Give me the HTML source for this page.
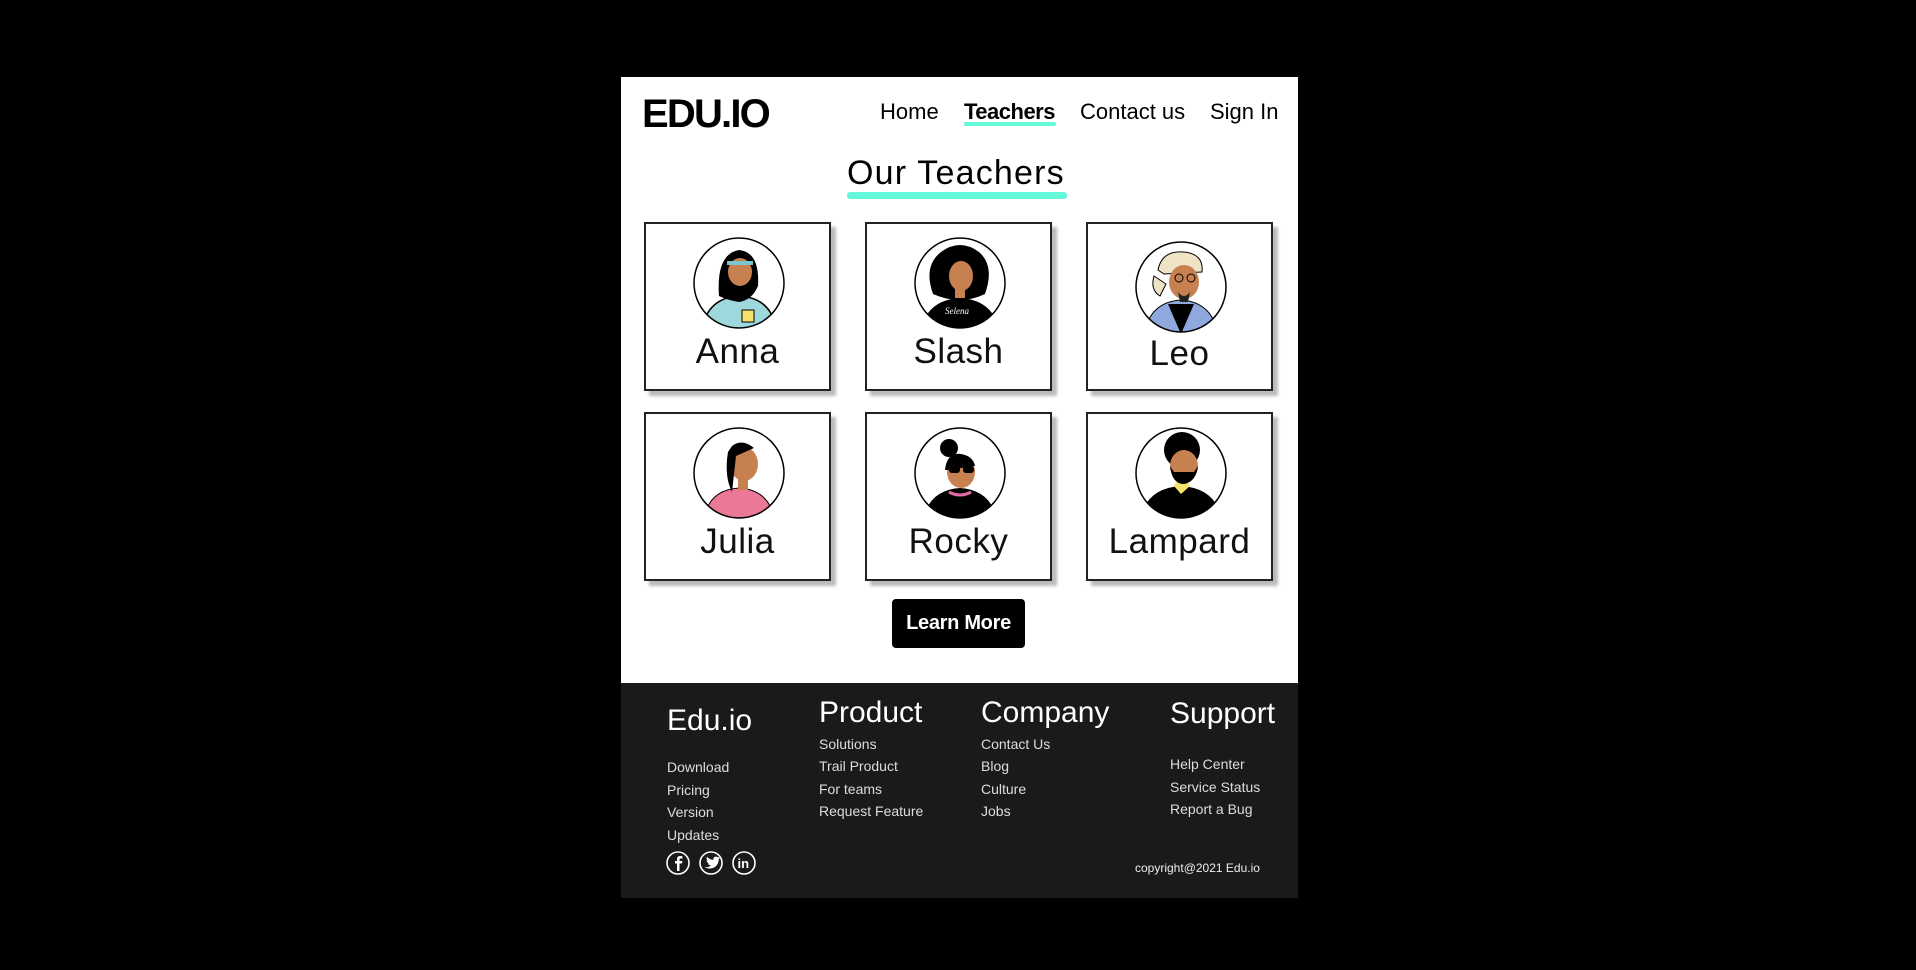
<!DOCTYPE html>
<html><head><meta charset="utf-8"><style>
*{margin:0;padding:0;box-sizing:border-box}
body{width:1916px;height:970px;background:#000;position:relative;overflow:hidden;font-family:"Liberation Sans",sans-serif}
.page{position:absolute;left:621px;top:77px;width:677px;height:606px;background:#fff}
.abs{position:absolute;white-space:nowrap}
.logo{left:21px;top:15px;font-size:40px;font-weight:bold;letter-spacing:-1.8px;color:#000}
.nav{top:22px;font-size:22px;color:#000}
.card{position:absolute;width:187px;height:169px;border:2px solid #222;background:#fff;box-shadow:5px 5px 3px #bbb}
.card svg{position:absolute;left:46px;top:12px}
.card .nm{position:absolute;left:0;right:0;text-align:center;top:108px;font-size:35px;color:#111;letter-spacing:0.5px}
.foot{position:absolute;left:621px;top:683px;width:677px;height:215px;background:#1a1a1a;color:#fff}
.fh{font-size:30px;color:#fff}
.fl{font-size:14px;color:#ddd}
</style></head><body>
<div class="page">
<div class="abs logo">EDU.IO</div>
<div class="abs nav" style="left:259px">Home</div>
<div class="abs nav" style="left:343px;font-weight:bold;letter-spacing:-0.5px">Teachers</div>
<div style="position:absolute;left:343px;top:45px;width:92px;height:4px;background:#64f9d9;border-radius:2px"></div>
<div class="abs nav" style="left:459px">Contact us</div>
<div class="abs nav" style="left:589px">Sign In</div>
<div class="abs" style="left:226px;top:77px;font-size:34px;color:#000;letter-spacing:1.2px">Our Teachers</div>
<div style="position:absolute;left:226px;top:115px;width:220px;height:7px;background:#64f9d9;border-radius:3px"></div>

<div class="card" style="left:23px;top:145px">
<svg width="94" height="94" viewBox="0 0 94 94"><defs><clipPath id="c1"><circle cx="47" cy="47" r="45"/></clipPath></defs><g clip-path="url(#c1)"><path d="M10 94 Q15 62 47 60 Q80 62 84 94Z" fill="#9dd9dc" stroke="#000" stroke-width="1.5"/><path d="M27 60 Q24 18 47 14 Q68 16 66 50 Q60 64 47 66 Q35 64 27 60Z" fill="#000"/><ellipse cx="48" cy="36" rx="12" ry="14" fill="#c7804f"/><rect x="35" y="25" width="26" height="4" fill="#7cc6d0"/><rect x="50" y="74" width="12" height="12" fill="#f6e26a" stroke="#000"/></g><circle cx="47" cy="47" r="45" fill="none" stroke="#000" stroke-width="1.5"/></svg>
<div class="nm">Anna</div></div>

<div class="card" style="left:244px;top:145px">
<svg width="94" height="94" viewBox="0 0 94 94"><defs><clipPath id="c2"><circle cx="47" cy="47" r="45"/></clipPath></defs><g clip-path="url(#c2)"><path d="M20 58 Q10 30 28 16 Q47 2 66 16 Q82 30 72 58 Q47 70 20 58Z" fill="#000"/><path d="M8 94 Q14 64 47 62 Q80 64 86 94Z" fill="#000"/><ellipse cx="48" cy="40" rx="12" ry="15" fill="#c7804f"/><rect x="42" y="50" width="10" height="12" fill="#c7804f"/><text x="32" y="78" font-size="9" fill="#fff" font-style="italic" font-family="Liberation Serif,serif">Selena</text></g><circle cx="47" cy="47" r="45" fill="none" stroke="#000" stroke-width="1.5"/></svg>
<div class="nm">Slash</div></div>

<div class="card" style="left:465px;top:145px">
<svg width="94" height="94" viewBox="0 0 94 94" style="top:16px"><defs><clipPath id="c3"><circle cx="47" cy="47" r="45"/></clipPath></defs><g clip-path="url(#c3)"><path d="M10 94 Q16 62 47 60 Q78 62 84 94Z" fill="#8fa8de" stroke="#000"/><path d="M34 64 L47 94 L60 64Z" fill="#000"/><path d="M24 30 Q28 10 50 12 Q70 14 68 32 L30 34Z" fill="#eee3c4" stroke="#000"/><path d="M20 36 Q16 50 26 56 L32 44Z" fill="#eee3c4" stroke="#000"/><ellipse cx="50" cy="42" rx="15" ry="17" fill="#c7804f"/><path d="M44 52 Q50 60 56 52 L54 62 L46 62Z" fill="#222"/><circle cx="45" cy="38" r="4" fill="none" stroke="#000"/><circle cx="57" cy="38" r="4" fill="none" stroke="#000"/></g><circle cx="47" cy="47" r="45" fill="none" stroke="#000" stroke-width="1.5"/></svg>
<div class="nm" style="top:110px">Leo</div></div>

<div class="card" style="left:23px;top:335px">
<svg width="94" height="94" viewBox="0 0 94 94"><defs><clipPath id="c4"><circle cx="47" cy="47" r="45"/></clipPath></defs><g clip-path="url(#c4)"><path d="M12 94 Q16 64 47 62 Q78 64 82 94Z" fill="#ec7898" stroke="#000"/><ellipse cx="52" cy="38" rx="14" ry="17" fill="#c7804f"/><rect x="46" y="52" width="10" height="12" fill="#c7804f"/><path d="M40 20 Q50 12 62 22 L44 30 L40 66 Q32 50 36 26Z" fill="#000"/></g><circle cx="47" cy="47" r="45" fill="none" stroke="#000" stroke-width="1.5"/></svg>
<div class="nm">Julia</div></div>

<div class="card" style="left:244px;top:335px">
<svg width="94" height="94" viewBox="0 0 94 94"><defs><clipPath id="c5"><circle cx="47" cy="47" r="45"/></clipPath></defs><g clip-path="url(#c5)"><path d="M10 94 Q16 64 47 62 Q78 64 84 94Z" fill="#000"/><path d="M36 66 Q47 72 58 66" stroke="#e46aa8" stroke-width="3" fill="none"/><ellipse cx="48" cy="46" rx="14" ry="16" fill="#c7804f"/><circle cx="36" cy="22" r="9" fill="#000"/><path d="M32 44 Q34 26 48 28 Q60 30 62 40 L34 44Z" fill="#000"/><rect x="36" y="40" width="11" height="7" rx="3" fill="#000"/><rect x="50" y="40" width="11" height="7" rx="3" fill="#000"/></g><circle cx="47" cy="47" r="45" fill="none" stroke="#000" stroke-width="1.5"/></svg>
<div class="nm">Rocky</div></div>

<div class="card" style="left:465px;top:335px">
<svg width="94" height="94" viewBox="0 0 94 94"><defs><clipPath id="c6"><circle cx="47" cy="47" r="45"/></clipPath></defs><g clip-path="url(#c6)"><path d="M6 94 Q12 62 47 60 Q82 62 88 94Z" fill="#000"/><path d="M40 60 L47 68 L56 60 L54 56 L42 56Z" fill="#f6e26a"/><circle cx="48" cy="24" r="18" fill="#000"/><ellipse cx="50" cy="40" rx="14" ry="16" fill="#c7804f"/><path d="M36 40 Q38 58 50 58 Q62 56 64 40 L60 46 L40 46Z" fill="#000"/><path d="M34 28 Q48 18 64 30 L64 22 Q48 10 34 22Z" fill="#000"/></g><circle cx="47" cy="47" r="45" fill="none" stroke="#000" stroke-width="1.5"/></svg>
<div class="nm">Lampard</div></div>

<div style="position:absolute;left:271px;top:522px;width:133px;height:49px;background:#000;border-radius:4px;color:#fff;font-weight:bold;font-size:20px;text-align:center;line-height:49px;letter-spacing:-0.3px">Learn More</div>
</div>

<div class="foot">
<div class="abs fh" style="left:46px;top:21px">Edu.io</div>
<div class="abs fl" style="left:46px;top:76px">Download</div>
<div class="abs fl" style="left:46px;top:99px">Pricing</div>
<div class="abs fl" style="left:46px;top:121px">Version</div>
<div class="abs fl" style="left:46px;top:144px">Updates</div>

<div class="abs fh" style="left:198px;top:13px">Product</div>
<div class="abs fl" style="left:198px;top:53px">Solutions</div>
<div class="abs fl" style="left:198px;top:75px">Trail Product</div>
<div class="abs fl" style="left:198px;top:98px">For teams</div>
<div class="abs fl" style="left:198px;top:120px">Request Feature</div>

<div class="abs fh" style="left:360px;top:13px">Company</div>
<div class="abs fl" style="left:360px;top:53px">Contact Us</div>
<div class="abs fl" style="left:360px;top:75px">Blog</div>
<div class="abs fl" style="left:360px;top:98px">Culture</div>
<div class="abs fl" style="left:360px;top:120px">Jobs</div>

<div class="abs fh" style="left:549px;top:14px">Support</div>
<div class="abs fl" style="left:549px;top:73px">Help Center</div>
<div class="abs fl" style="left:549px;top:96px">Service Status</div>
<div class="abs fl" style="left:549px;top:118px">Report a Bug</div>

<div class="abs" style="left:514px;top:178px;font-size:12px;color:#eee">copyright@2021 Edu.io</div>

<svg style="position:absolute;left:45px;top:167px" width="112" height="26" viewBox="0 0 112 26">
<g fill="none" stroke="#fff" stroke-width="1.6">
<circle cx="12" cy="13" r="11"/><circle cx="45" cy="13" r="11"/><circle cx="78" cy="13" r="11"/></g>
<path d="M13.5 21 V13.5 H16 L16.4 11 H13.5 V9.6 Q13.5 8.5 14.7 8.5 H16.5 V6.2 Q15 6 14 6 Q11 6 11 9.2 V11 H9 V13.5 H11 V21Z" fill="#fff"/>
<path d="M38 17 Q42 18 45 15.5 Q42.5 15.3 41.8 13.4 Q42.6 13.5 43 13.2 Q40.6 12.5 40.5 10.3 Q41.2 10.7 41.9 10.7 Q39.8 9 41 6.8 Q43.6 9.8 47.3 10 Q47 6.8 50 6.6 Q51.3 6.6 52 7.4 Q53 7.2 53.8 6.8 Q53.4 7.8 52.6 8.3 Q53.4 8.2 54 7.9 Q53.4 8.8 52.7 9.3 Q52.8 14 49 17 Q44 20.3 38 17Z" fill="#fff"/>
<text x="71.5" y="18" font-size="13" font-weight="bold" fill="#fff" font-family="Liberation Sans,sans-serif">in</text>
</svg>
</div>
</body></html>
